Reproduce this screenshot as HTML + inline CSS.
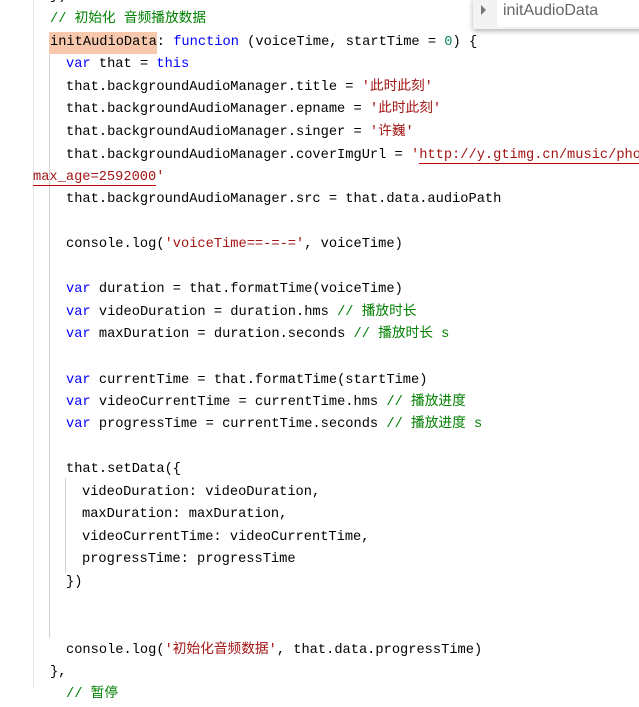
<!DOCTYPE html>
<html><head><meta charset="utf-8"><style>
body{margin:0;width:639px;height:688px;background:#fff;overflow:hidden;position:relative;font-family:"Liberation Mono","Noto Sans CJK SC",monospace;font-size:13.7px;color:#000}
.l{position:absolute;white-space:pre;height:22.5px;line-height:22.5px}
.c{color:#008000}.k{color:#0000ff}.s{color:#a31515}.n{color:#098658}
.g{position:absolute;width:1px;background:#d0d0d0}
.u{border-bottom:1.5px solid #c00000}
#w{position:absolute;left:0;top:3px;width:639px;height:700px}
</style></head><body>
<div class="g" style="left:33px;top:0;height:688px;background:#e4e4e4"></div>
<div id="w">
<div class="g" style="left:49px;top:52px;height:583px"></div>
<div class="g" style="left:65px;top:475px;height:95px"></div>
<div style="position:absolute;left:49px;top:29px;width:108px;height:22px;background:#f8c8ad"></div>
<div class="l" style="left:50px;top:-17px">})</div>
<div class="l c" style="left:50px;top:6px">// 初始化 音频播放数据</div>
<div class="l" style="left:50px;top:29px">initAudioData: <span class="k">function</span> (voiceTime, startTime = <span class="n">0</span>) {</div>
<div class="l" style="left:66px;top:51px"><span class="k">var</span> that = <span class="k">this</span></div>
<div class="l" style="left:66px;top:74px">that.backgroundAudioManager.title = <span class="s">'此时此刻'</span></div>
<div class="l" style="left:66px;top:96px">that.backgroundAudioManager.epname = <span class="s">'此时此刻'</span></div>
<div class="l" style="left:66px;top:119px">that.backgroundAudioManager.singer = <span class="s">'许巍'</span></div>
<div class="l" style="left:66px;top:142px">that.backgroundAudioManager.coverImgUrl = <span class="s">'<span class="u">http://y.gtimg.cn/music/photo</span></span></div>
<div class="l s" style="left:33px;top:164px"><span class="u">max_age=2592000</span>'</div>
<div class="l" style="left:66px;top:186px">that.backgroundAudioManager.src = that.data.audioPath</div>
<div class="l" style="left:66px;top:231px">console.log(<span class="s">'voiceTime==-=-='</span>, voiceTime)</div>
<div class="l" style="left:66px;top:276px"><span class="k">var</span> duration = that.formatTime(voiceTime)</div>
<div class="l" style="left:66px;top:299px"><span class="k">var</span> videoDuration = duration.hms <span class="c">// 播放时长</span></div>
<div class="l" style="left:66px;top:321px"><span class="k">var</span> maxDuration = duration.seconds <span class="c">// 播放时长 s</span></div>
<div class="l" style="left:66px;top:367px"><span class="k">var</span> currentTime = that.formatTime(startTime)</div>
<div class="l" style="left:66px;top:389px"><span class="k">var</span> videoCurrentTime = currentTime.hms <span class="c">// 播放进度</span></div>
<div class="l" style="left:66px;top:411px"><span class="k">var</span> progressTime = currentTime.seconds <span class="c">// 播放进度 s</span></div>
<div class="l" style="left:66px;top:456px">that.setData({</div>
<div class="l" style="left:82px;top:479px">videoDuration: videoDuration,</div>
<div class="l" style="left:82px;top:501px">maxDuration: maxDuration,</div>
<div class="l" style="left:82px;top:524px">videoCurrentTime: videoCurrentTime,</div>
<div class="l" style="left:82px;top:546px">progressTime: progressTime</div>
<div class="l" style="left:66px;top:569px">})</div>
<div class="l" style="left:66px;top:637px">console.log(<span class="s">'初始化音频数据'</span>, that.data.progressTime)</div>
<div class="l" style="left:50px;top:659px">},</div>
<div class="l c" style="left:66px;top:681px">// 暂停</div>
</div>
<div style="position:absolute;left:473px;top:-2px;width:170px;height:31px;background:#f3f3f3;box-shadow:0 2px 5px rgba(0,0,0,.3)"></div>
<div style="position:absolute;left:497px;top:0;width:142px;height:27px;background:#fff"></div>
<div style="position:absolute;left:481px;top:5px;width:0;height:0;border-top:5px solid transparent;border-bottom:5px solid transparent;border-left:5px solid #777"></div>
<div style="position:absolute;left:503px;top:-1px;font-family:'Liberation Sans',sans-serif;font-size:16px;color:#666;line-height:24px">initAudioData</div>
</body></html>
